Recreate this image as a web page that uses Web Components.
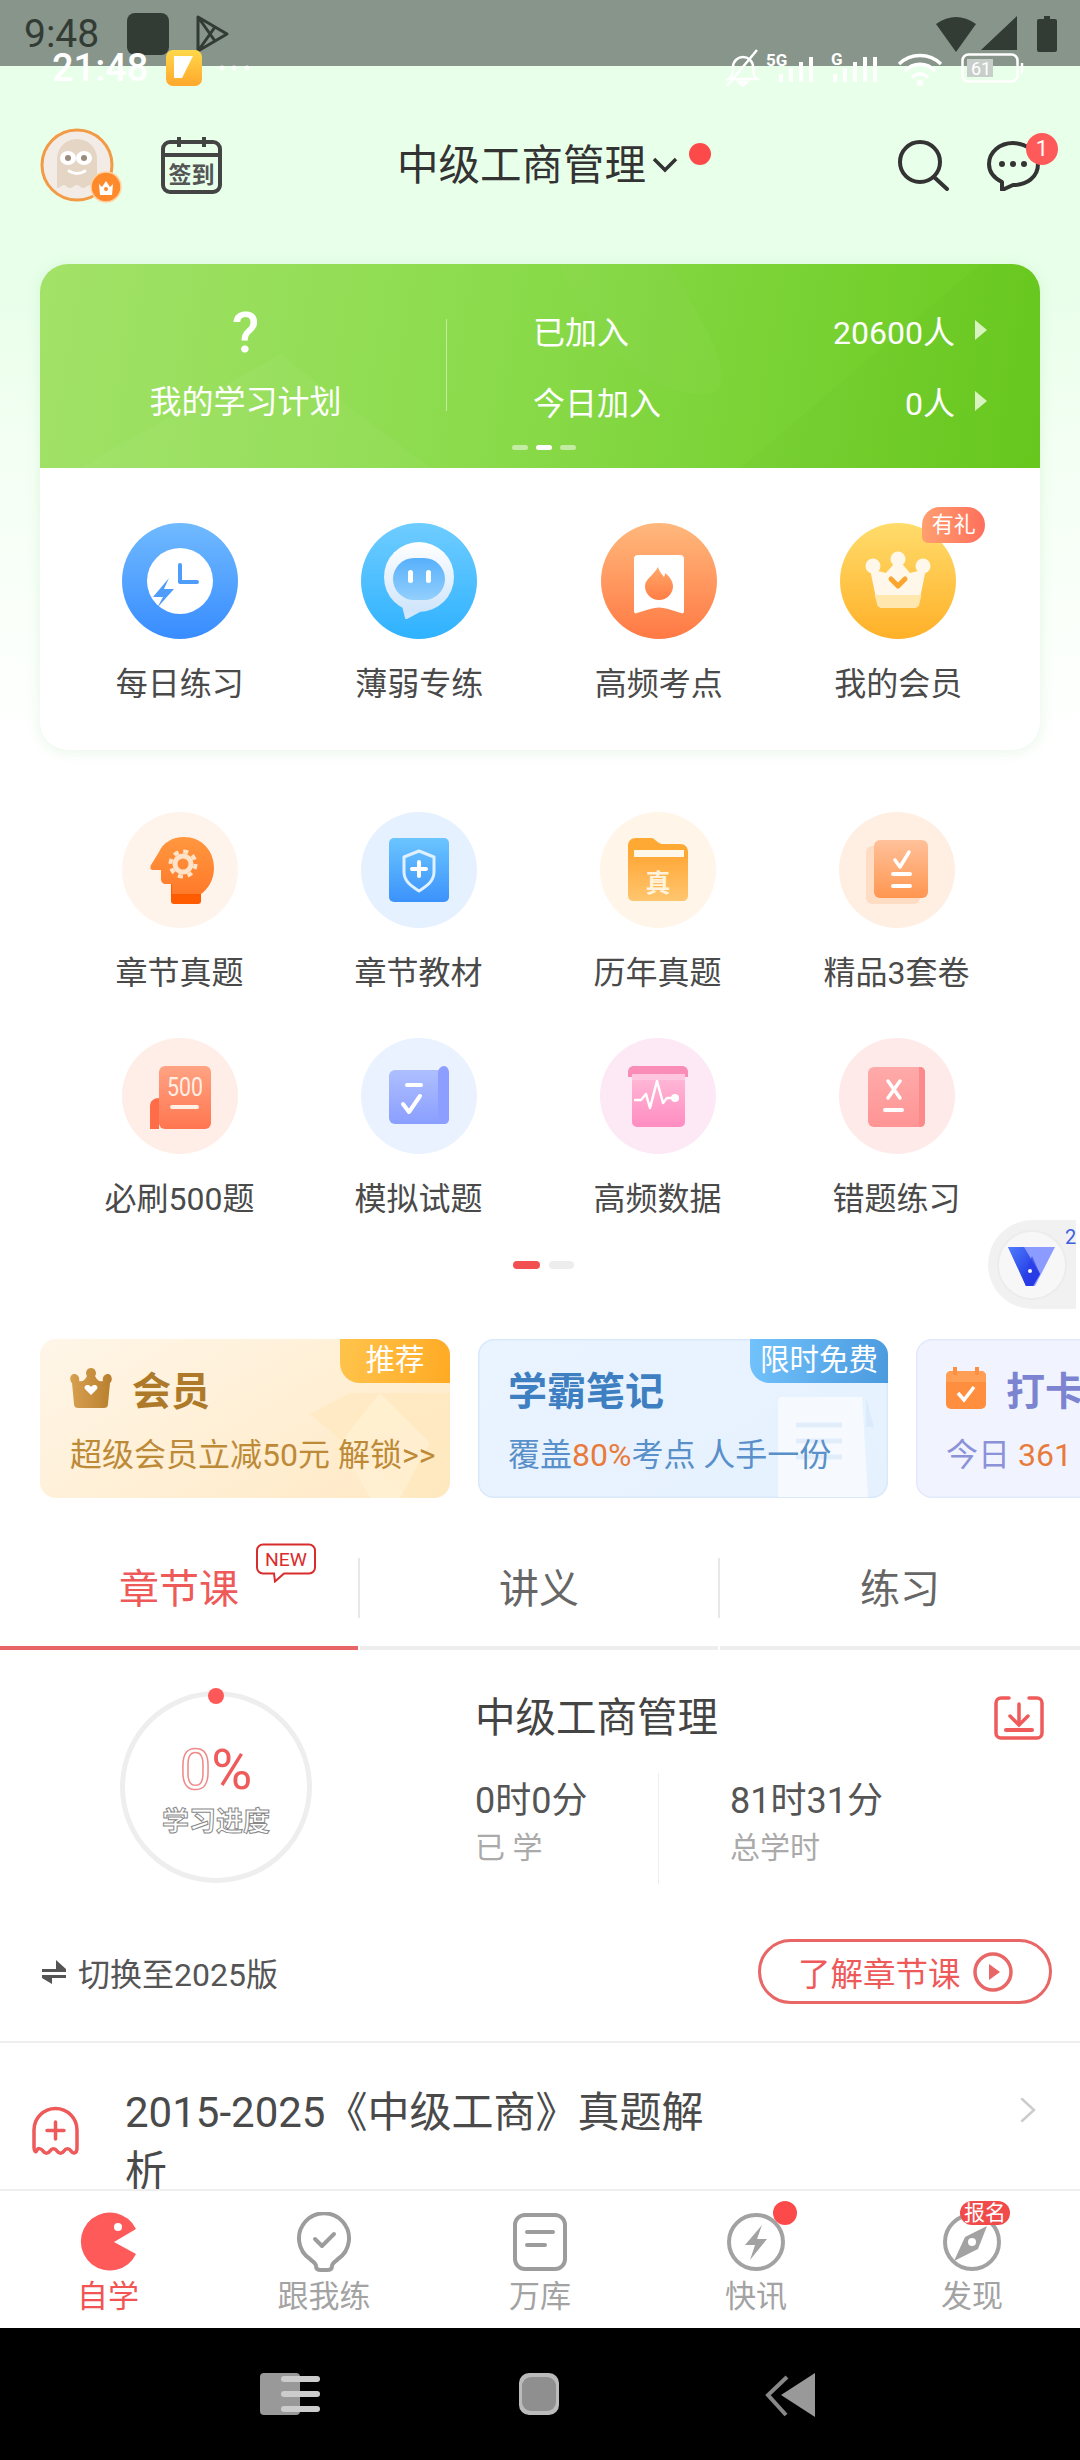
<!DOCTYPE html>
<html lang="zh">
<head>
<meta charset="utf-8">
<title>中级工商管理</title>
<style>
  html, body { margin: 0; padding: 0; background: #fff; }
  body {
    width: 1080px;
    height: 2460px;
    overflow: hidden;
    font-family: Roboto, "Noto Sans CJK SC", sans-serif;
  }
</style>
</head>
<body>
  <status-bar></status-bar>
  <top-area>
    <app-header></app-header>
    <plan-card></plan-card>
  </top-area>
  <tool-grid></tool-grid>
  <promo-row></promo-row>
  <course-tabs></course-tabs>
  <progress-panel></progress-panel>
  <course-row></course-row>
  <bottom-nav></bottom-nav>
  <system-nav></system-nav>

<script>
// tile artwork, all drawn on a 116 box
const TILE_ICONS = {
  clock: `<defs><linearGradient id="g" x1="0" y1="0" x2="0" y2="1"><stop offset="0" stop-color="#70baff"/><stop offset="1" stop-color="#388cff"/></linearGradient></defs>
    <circle cx="58" cy="58" r="58" fill="url(#g)"/><circle cx="58" cy="58" r="33" fill="#fff"/>
    <path d="M58 42v17h17" fill="none" stroke="#4f9dfb" stroke-width="4" stroke-linecap="round" stroke-linejoin="round"/>
    <path d="M47 55 31 74h10l-6 11 17-19H42z" fill="#4f9dfb"/>`,
  robot: `<defs><linearGradient id="g" x1="0" y1="0" x2="0" y2="1"><stop offset="0" stop-color="#6fccff"/><stop offset="1" stop-color="#2fb2ff"/></linearGradient>
    <linearGradient id="w" x1="0" y1="0" x2="0" y2="1"><stop offset="0" stop-color="#fff"/><stop offset="1" stop-color="#cfe5fb"/></linearGradient>
    <linearGradient id="f" x1="0" y1="0" x2="0" y2="1"><stop offset="0" stop-color="#57b0fb"/><stop offset="1" stop-color="#92cffd"/></linearGradient></defs>
    <circle cx="58" cy="58" r="58" fill="url(#g)"/>
    <path d="M41 83l3 12c0 1 1 1 2 1l13-7z" fill="#d3e6fb"/><circle cx="58" cy="54" r="35" fill="url(#w)"/>
    <rect x="32" y="35" width="52" height="42" rx="21" fill="url(#f)"/>
    <rect x="47" y="47" width="5" height="13" rx="2.5" fill="#fff"/><rect x="65" y="47" width="5" height="13" rx="2.5" fill="#fff"/>`,
  flame: `<defs><linearGradient id="g" x1="0" y1="0" x2="0" y2="1"><stop offset="0" stop-color="#ffb87c"/><stop offset="1" stop-color="#ff7944"/></linearGradient>
    <linearGradient id="f" x1="0" y1="0" x2="0" y2="1"><stop offset="0" stop-color="#ffa86a"/><stop offset="1" stop-color="#ff7d45"/></linearGradient></defs>
    <circle cx="58" cy="58" r="58" fill="url(#g)"/>
    <path d="M37 32h42a4 4 0 0 1 4 4v52c0 2-1 3-3 2l-13-4c-6-2-12-2-18 0l-13 4c-2 1-3 0-3-2V36a4 4 0 0 1 4-4z" fill="#fff"/>
    <path d="M57 44c2 6 4 7 6 10 1-2 1-3 1-4 4 3 8 8 8 13a14 14 0 0 1-28 0c0-7 9-11 13-19z" fill="url(#f)"/>`,
  crown: `<defs><linearGradient id="g" x1="0" y1="0" x2="0" y2="1"><stop offset="0" stop-color="#ffdc6b"/><stop offset="1" stop-color="#ffb028"/></linearGradient></defs>
    <circle cx="58" cy="58" r="58" fill="url(#g)"/>
    <g fill="#fff8ea"><circle cx="33" cy="43" r="7.5"/><circle cx="58" cy="36" r="7.5"/><circle cx="83" cy="43" r="7.5"/>
    <path d="M30 46l16 4 12-14 12 14 16-4-7 34a5 5 0 0 1-5 5H42a5 5 0 0 1-5-5z"/></g>
    <path d="M34.500 72h47l-2 8a5 5 0 0 1-5 5H42a5 5 0 0 1-5-5z" fill="#ffe7ad"/>
    <path d="M51 56l7 7 7-7" fill="none" stroke="#fba52f" stroke-width="5" stroke-linejoin="round" stroke-linecap="round"/>`,
  head: `<defs><linearGradient id="g" x1="0" y1="0" x2="0" y2="1"><stop offset="0" stop-color="#ff973f"/><stop offset="1" stop-color="#ff7a2b"/></linearGradient></defs>
    <rect x="49" y="68" width="30" height="24" rx="3" fill="#ff5b00"/>
    <path d="M62 25c17 0 30 13 30 31 0 12-6 21-13 26H50V72h-6c-3 0-5-2-5-5V58h-8c-3 0-3-3-2-5l8-13C41 31 50 25 62 25z" fill="url(#g)"/>
    <circle cx="61" cy="52" r="8" fill="none" stroke="#ffe3c8" stroke-width="5"/>
    <circle cx="61" cy="52" r="12.500" fill="none" stroke="#ffe3c8" stroke-width="4" stroke-dasharray="5 4.800"/>`,
  shield: `<defs><linearGradient id="g" x1="0" y1="0" x2="0" y2="1"><stop offset="0" stop-color="#6ac5ff"/><stop offset="1" stop-color="#3c92fb"/></linearGradient></defs>
    <rect x="28" y="26" width="60" height="64" rx="5" fill="url(#g)"/>
    <path d="M58 39l15 6v15c0 9-7 14-15 19-8-5-15-10-15-19V45z" fill="none" stroke="#dff0ff" stroke-width="3" stroke-linejoin="round"/>
    <path d="M58 50v14M51 57h14" stroke="#fff" stroke-width="4" stroke-linecap="round"/>`,
  folder: `<defs><linearGradient id="g" x1="0" y1="0" x2="0" y2="1"><stop offset="0" stop-color="#ffa93a"/><stop offset="1" stop-color="#ffc66f"/></linearGradient></defs>
    <path d="M28 34c0-5 3-8 8-8h15c4 0 6 5 11 6h18c5 0 8 3 8 8v10H28z" fill="#ffa935"/>
    <rect x="34" y="38" width="50" height="12" fill="#fff7ea"/>
    <path d="M28 45h60v38c0 4-2 6-6 6H34c-4 0-6-2-6-6z" fill="url(#g)"/>
    <text x="58" y="80" font-size="25" font-weight="700" fill="#fff3dc" text-anchor="middle">真</text>`,
  list: `<defs><linearGradient id="g" x1="0" y1="0" x2="0" y2="1"><stop offset="0" stop-color="#ffc19a"/><stop offset="1" stop-color="#ff9650"/></linearGradient></defs>
    <rect x="27" y="34" width="54" height="58" rx="6" fill="#ffdcc4"/><rect x="35" y="28" width="54" height="58" rx="6" fill="url(#g)"/>
    <path d="M56 48l5 7 9-15" fill="none" stroke="#fff" stroke-width="3.5" stroke-linecap="round" stroke-linejoin="round"/>
    <path d="M54 62h17M54 74h17" stroke="#fff" stroke-width="4" stroke-linecap="round"/>`,
  scroll500: `<defs><linearGradient id="g" x1="0" y1="0" x2="0" y2="1"><stop offset="0" stop-color="#ffa383"/><stop offset="1" stop-color="#ff7650"/></linearGradient></defs>
    <rect x="37" y="28" width="52" height="63" rx="6" fill="url(#g)"/><path d="M28 91V68c0-5 4-8 9-8v31z" fill="#ff6d48"/>
    <text x="63" y="58" font-size="25" fill="#fff0e6" text-anchor="middle" textLength="36" lengthAdjust="spacingAndGlyphs">500</text>
    <path d="M50 69h25" stroke="#fff0e6" stroke-width="4" stroke-linecap="round"/>`,
  scroll: `<defs><linearGradient id="g" x1="0" y1="0" x2="0" y2="1"><stop offset="0" stop-color="#aebfff"/><stop offset="1" stop-color="#8a9eff"/></linearGradient></defs>
    <path d="M34 32h48v54H34a6 6 0 0 1-6-6V38a6 6 0 0 1 6-6z" fill="url(#g)"/>
    <path d="M77 35c0-4 3-7 6-7s5 3 5 7v46c0 3-2 5-5 5h-6z" fill="#8c9eff"/>
    <path d="M46 47h14" stroke="#fff" stroke-width="4" stroke-linecap="round"/>
    <path d="M42 66l6 8 11-16" fill="none" stroke="#fff" stroke-width="4" stroke-linecap="round" stroke-linejoin="round"/>`,
  pulse: `<defs><linearGradient id="g" x1="0" y1="0" x2="0" y2="1"><stop offset="0" stop-color="#ffc0da"/><stop offset="1" stop-color="#ff8cc1"/></linearGradient></defs>
    <rect x="32" y="30" width="53" height="59" rx="5" fill="url(#g)"/><path d="M28 34c0-4 3-6 6-6h48c3 0 6 2 6 6v5H28z" fill="#f98db8"/><rect x="32" y="36" width="53" height="6" fill="#ffc6dd"/>
    <path d="M34 62h7l5-6 4 14 7-27 6 22 4-5h10" fill="none" stroke="#fff" stroke-width="2.5" stroke-linejoin="round"/><circle cx="75" cy="60" r="4" fill="#fff"/>`,
  cross: `<defs><linearGradient id="g" x1="0" y1="0" x2="0" y2="1"><stop offset="0" stop-color="#ffaaaa"/><stop offset="1" stop-color="#ff9494"/></linearGradient></defs>
    <rect x="29" y="29" width="57" height="60" rx="6" fill="url(#g)"/><path d="M80 29h1c3 0 5 2 5 5v50c0 3-2 5-5 5h-1z" fill="#fd8a8a"/>
    <path d="M49 43l12 17M61 43 49 60" stroke="#fff" stroke-width="3.5" stroke-linecap="round"/>
    <path d="M46 72h17" stroke="#fff" stroke-width="4" stroke-linecap="round"/>`
};

// bottom bar artwork on a 60 box
const NAV_ICONS = {
  pac: `<path d="M58 17A29 29 0 1 0 58 42L36 30z" fill="#fe5a5a"/><circle cx="40" cy="15" r="4" fill="#fff"/>`,
  bulb: `<path d="M22 55c0-3-3-4-6-7a25 25 0 1 1 28 0c-3 3-6 4-6 7 0 3-2 4-5 4H27c-3 0-5-1-5-4z" transform="translate(0 -1)" fill="none" stroke="#9c9c9c" stroke-width="4"/><path d="M21 27l7 7 12-12" fill="none" stroke="#9c9c9c" stroke-width="4" stroke-linecap="round" stroke-linejoin="round"/>`,
  book: `<rect x="5" y="3" width="50" height="54" rx="10" fill="none" stroke="#9c9c9c" stroke-width="4"/><path d="M17 20h26M17 33h18" stroke="#9c9c9c" stroke-width="4" stroke-linecap="round"/>`,
  bolt: `<circle cx="30" cy="30" r="27" fill="none" stroke="#a2a2a2" stroke-width="4"/><path d="M36 13 19 33h10l-5 15 17-21H31z" fill="#a2a2a2"/>`,
  compass: `<circle cx="30" cy="30" r="27" fill="none" stroke="#a2a2a2" stroke-width="4"/><path d="M45 14 36 37 12 49 23 25z" fill="#a2a2a2"/><circle cx="30" cy="30" r="4" fill="#fff"/>`
};

class StatusBar extends HTMLElement {
  constructor() {
    super();
    this.attachShadow({ mode: "open" });
    this.shadowRoot.innerHTML = `
      <style>
        :host { display: block; position: relative; height: 66px; background: #87958a; }
        .outer { display: flex; align-items: center; height: 68px; padding-left: 24px; color: #333b35; }
        .time { font-size: 39px; width: 103px; }
        .right { margin-left: auto; margin-right: 23px; display: flex; align-items: center; }
        /* the app's own bar shows through on top of the system one */
        .inner { position: absolute; left: 52px; right: 55px; top: 50px; height: 36px; display: flex; align-items: center; color: #fff; }
        .clock { font-size: 38px; font-weight: 500; width: 114px; }
        .tray { margin-left: auto; display: flex; align-items: center; }
        svg { display: block; }
      </style>
      <div class="outer">
        <span class="time">9:48</span>
        <svg width="42" height="42"><rect width="42" height="42" rx="8" fill="#333b35"/></svg>
        <svg width="36" height="40" style="margin-left:26px" fill="none" stroke="#333b35" stroke-width="3" stroke-linejoin="round"><path d="M3 3v34l29-17zM3 3l17 24M3 37l17-24"/></svg>
        <div class="right">
          <svg width="40" height="36"><path d="M0 8Q20-6 40 8L20 36z" fill="#333b35"/></svg>
          <svg width="36" height="36" style="margin-left:5px"><path d="M36 0v34H0z" fill="#333b35"/></svg>
          <svg width="20" height="36" style="margin-left:20px"><path d="M7 0h6v3h5a2 2 0 0 1 2 2v29a2 2 0 0 1-2 2H2a2 2 0 0 1-2-2V5a2 2 0 0 1 2-2h5z" fill="#333b35"/></svg>
        </div>
      </div>
      <div class="inner">
        <span class="clock">21:48</span>
        <svg width="36" height="36"><defs><linearGradient id="y" x1="0" y1="0" x2="0" y2="1"><stop offset="0" stop-color="#ffd84a"/><stop offset="1" stop-color="#ffa72c"/></linearGradient></defs><rect width="36" height="36" rx="7" fill="url(#y)"/><path d="M8 6h19L16 28H8z" fill="#fff"/></svg>
        <svg width="32" height="6" style="margin-left:17px" fill="#fff" opacity=".9"><circle cx="3" cy="3" r="2.5"/><circle cx="15" cy="3" r="2.5"/><circle cx="28" cy="3" r="2.5"/></svg>
        <div class="tray">
          <svg width="240" height="38" fill="#fff" stroke="none">
            <path d="M4 30c3-2 4-5 4-12 0-6 5-10 10-10s10 4 10 10c0 7 1 10 4 12zM14 33h8l-4 4zM2 37 32 1" fill="none" stroke="#fff" stroke-width="2.5"/>
            <text x="41" y="17" font-size="17" font-weight="700">5G</text>
            <path d="M54 25h4v8h-4zM64 19h4v14h-4zM74 13h4v20h-4zM84 8h4v25h-4z"/>
            <text x="106" y="16" font-size="17" font-weight="700">G</text>
            <path d="M108 25h4v8h-4zM118 19h4v14h-4zM128 13h4v20h-4zM148 8h4v25h-4zM138 8h4v25h-4z"/>
            <path d="M174 15a30 30 0 0 1 42 0M180 22a20 20 0 0 1 30 0M187 29a10 10 0 0 1 16 0" fill="none" stroke="#fff" stroke-width="3.5"/><circle cx="195" cy="34" r="3"/>
          </svg>
          <svg width="64" height="30" style="margin-left:-4px" fill="none" stroke="#fff" stroke-width="2.5"><rect x="1.5" y="1.5" width="55" height="27" rx="6"/><rect x="6" y="6" width="26" height="18" fill="#c8cfca" stroke="none"/><text x="20" y="22" font-size="18" text-anchor="middle" fill="#fff" stroke="none">61</text><path d="M61 10v10"/></svg>
        </div>
      </div>
    `;
  }
}

class TopArea extends HTMLElement {
  constructor() {
    super();
    this.attachShadow({ mode: "open" });
    this.shadowRoot.innerHTML = `
      <style>
        :host { display: block; background: linear-gradient(#e8ffe9 0, #e8ffe9 210px, #f4fff4 400px, #fff 684px); }
      </style>
      <slot></slot>
    `;
  }
}

class AppHeader extends HTMLElement {
  constructor() {
    super();
    this.attachShadow({ mode: "open" });
    this.shadowRoot.innerHTML = `
      <style>
        :host { display: flex; align-items: center; height: 66px; padding: 66px 40px 0 40px; color: #333; }
        svg { display: block; flex: none; }
        .avatar { position: relative; flex: none; width: 74px; height: 74px; }
        .crown { position: absolute; left: 50px; top: 43px; }
        .cal { margin-left: 47px; }
        .title { margin-left: 175px; padding-top: 2px; font-size: 41.5px; line-height: 66px; color: #333; white-space: nowrap; }
        .drop { margin-left: 6px; }
        .dot { position: relative; top: -11px; margin-left: 11px; width: 22px; height: 22px; border-radius: 50%; background: #fc4a4a; }
        .search { margin-left: auto; }
        .chat { position: relative; margin-left: 37px; width: 53px; height: 48px; }
        .badge { position: absolute; left: 39px; top: -8px; width: 32px; height: 32px; border-radius: 50%; background: #ff5a5a; color: #fff; font-size: 22px; line-height: 32px; text-align: center; }
      </style>
      <div class="avatar">
        <svg width="74" height="74">
          <circle cx="37" cy="37" r="35" fill="#f3ebe6" stroke="#f39a45" stroke-width="3"/>
          <path d="M17 60V31a20 20 0 0 1 40 0v29c-3 0-4-3-7-3s-4 3-7 3-3-3-6-3-4 3-7 3-4-3-6-3-4 3-7 3z" fill="#e4d5c5"/>
          <ellipse cx="28" cy="30" rx="8" ry="7" fill="#fff"/><ellipse cx="44" cy="30" rx="8" ry="7" fill="#fff"/>
          <circle cx="28" cy="30" r="3" fill="#9a8b7d"/><circle cx="44" cy="30" r="3" fill="#9a8b7d"/>
          <path d="M29 43q8 5 16 0" fill="none" stroke="#fff" stroke-width="3" stroke-linecap="round"/>
        </svg>
        <svg class="crown" width="32" height="32">
          <circle cx="16" cy="16" r="15" fill="#ff8a2b" stroke="#ffd3a8" stroke-width="1.5"/>
          <path d="M9 13l3 3 4-6 4 6 3-3-1 11H10z" fill="#fff"/><circle cx="16" cy="18" r="2" fill="#ff8a2b"/>
        </svg>
      </div>
      <svg class="cal" width="61" height="58" fill="none" stroke="#444" stroke-width="4">
        <rect x="2" y="6" width="57" height="50" rx="7"/><path d="M2 19h57M18 1v10M43 1v10"/>
        <text x="30.5" y="47" font-size="23" font-weight="700" fill="#555" stroke="none" text-anchor="middle">签到</text>
      </svg>
      <div class="title">中级工商管理</div>
      <svg class="drop" width="26" height="16" fill="none" stroke="#333" stroke-width="3.5"><path d="M2 2l11 11L24 2"/></svg>
      <div class="dot"></div>
      <svg class="search" width="54" height="52" fill="none" stroke="#333" stroke-width="4" stroke-linecap="round"><circle cx="24" cy="23" r="20"/><path d="M38 38l13 12"/></svg>
      <div class="chat">
        <svg width="53" height="50" fill="none" stroke="#333" stroke-width="4" stroke-linejoin="round">
          <path d="M26 2c13 0 25 9 25 21 0 13-11 21-25 21l-11 5v-8C7 37 2 31 2 23 2 11 13 2 26 2z"/>
          <circle cx="15" cy="23" r="3" fill="#333" stroke="none"/><circle cx="26" cy="23" r="3" fill="#333" stroke="none"/><circle cx="37" cy="23" r="3" fill="#333" stroke="none"/>
        </svg>
        <div class="badge">1</div>
      </div>
    `;
  }
}

class IconTile extends HTMLElement {
  static get observedAttributes() {
    return ["icon", "label", "bg", "tag"];
  }

  connectedCallback() {
    this.render();
  }

  attributeChangedCallback(name, oldValue, newValue) {
    if (oldValue !== newValue) {
      this.render();
    }
  }

  constructor() {
    super();
    this.attachShadow({ mode: "open" });
  }

  render() {
    const bg = this.getAttribute("bg") || "transparent";
    const tag = this.getAttribute("tag");
    this.shadowRoot.innerHTML = `
      <style>
        :host { display: flex; flex-direction: column; align-items: center; }
        .pic { position: relative; width: 116px; height: 116px; border-radius: 50%; background: ${bg}; }
        svg { display: block; }
        .tag { position: absolute; left: 82px; top: -16px; width: 63px; height: 36px; border-radius: 18px 18px 18px 6px; background: linear-gradient(90deg, #ffa070, #ff6f5c); color: #fff; font-size: 22px; line-height: 36px; text-align: center; }
        .label { margin-top: 23px; font-size: 32px; line-height: 44px; color: #4a4a4a; white-space: nowrap; }
      </style>
      <div class="pic">
        <svg width="116" height="116" viewBox="0 0 116 116">${TILE_ICONS[this.getAttribute("icon")] || ""}</svg>
        ${tag ? `<div class="tag">${tag}</div>` : ""}
      </div>
      <div class="label">${this.getAttribute("label") || ""}</div>
    `;
  }
}

class PlanCard extends HTMLElement {
  constructor() {
    super();
    this.attachShadow({ mode: "open" });
    this.shadowRoot.innerHTML = `
      <style>
        :host { display: block; width: 1000px; height: 486px; margin: 66px 0 0 40px; border-radius: 28px; overflow: hidden; background: #fff; box-shadow: 0 2px 14px rgba(110, 200, 120, .16); }
        .banner { position: relative; box-sizing: border-box; height: 204px; padding-top: 30px; color: #fff; overflow: hidden; background: linear-gradient(100deg, #a2e268 0, #8bdb4c 45%, #69ca1e 100%); }
        .shape { position: absolute; left: 0; top: 0; }
        .cols { position: relative; display: grid; grid-template-columns: 406px 1px 1fr; height: 142px; }
        .plan { display: flex; flex-direction: column; align-items: center; padding: 9px 0 0 5px; }
        .q { font-size: 56px; font-weight: 500; line-height: 60px; }
        .plan span:last-child { margin-top: 17px; font-size: 32px; line-height: 44px; }
        .rule { align-self: center; height: 92px; background: rgba(255, 255, 255, .45); }
        .stats { padding: 0 53px 0 86px; }
        .row { display: flex; align-items: center; height: 71px; font-size: 32px; }
        .row b { margin-left: auto; font-weight: 400; }
        .row svg { margin-left: 20px; }
        .dots { position: relative; display: flex; justify-content: center; gap: 8px; margin-top: 9px; padding-left: 8px; }
        .dots i { width: 16px; height: 5px; border-radius: 3px; background: rgba(255, 255, 255, .5); }
        .dots i:nth-child(2) { background: #fff; }
        .tiles { display: grid; grid-template-columns: repeat(4, 239.5px); padding: 55px 20px 0; }
      </style>
      <div class="banner">
        <svg class="shape" width="1000" height="204"><path d="M40 204 240 90l150 114z" fill="#fff" opacity=".04"/><path d="M520 0h110c40 70 70 120 40 130-60 6-120-60-150-130z" fill="#fff" opacity=".025"/><path d="M700 204 940 0h60v204z" fill="#000" opacity=".012"/></svg>
        <div class="cols">
          <div class="plan"><span class="q">?</span><span>我的学习计划</span></div>
          <div class="rule"></div>
          <div class="stats">
            <div class="row"><span>已加入</span><b>20600人</b><svg width="12" height="20"><path d="M0 0l12 10L0 20z" fill="#d8f3bd"/></svg></div>
            <div class="row"><span>今日加入</span><b>0人</b><svg width="12" height="20"><path d="M0 0l12 10L0 20z" fill="#d8f3bd"/></svg></div>
          </div>
        </div>
        <div class="dots"><i></i><i></i><i></i></div>
      </div>
      <div class="tiles">
        <icon-tile icon="clock" label="每日练习"></icon-tile>
        <icon-tile icon="robot" label="薄弱专练"></icon-tile>
        <icon-tile icon="flame" label="高频考点"></icon-tile>
        <icon-tile icon="crown" label="我的会员" tag="有礼"></icon-tile>
      </div>
    `;
  }
}

class ToolGrid extends HTMLElement {
  constructor() {
    super();
    this.attachShadow({ mode: "open" });
    this.shadowRoot.innerHTML = `
      <style>
        :host { display: block; position: relative; padding-top: 62px; }
        .grid { display: grid; grid-template-columns: repeat(4, 239px); row-gap: 43px; padding-left: 60px; }
        .pager { display: flex; gap: 9px; margin: 40px 0 0 513px; }
        .pager i { width: 25px; height: 8px; border-radius: 4px; background: #ededed; }
        .pager i:first-child { width: 27px; background: #f25050; }
        .float { position: absolute; left: 988px; top: 470px; width: 88px; height: 89px; border-radius: 45px 0 0 45px; background: #f1f1f1; }
        .float svg { position: absolute; left: 0; top: 0; }
        .float span { position: absolute; left: 77px; top: 5px; font-size: 20px; line-height: 24px; color: #3f5fe0; }
      </style>
      <div class="grid">
        <icon-tile icon="head" bg="#fff4ec" label="章节真题"></icon-tile>
        <icon-tile icon="shield" bg="#e6f1ff" label="章节教材"></icon-tile>
        <icon-tile icon="folder" bg="#fff5e9" label="历年真题"></icon-tile>
        <icon-tile icon="list" bg="#ffefe3" label="精品3套卷"></icon-tile>
        <icon-tile icon="scroll500" bg="#ffeee7" label="必刷500题"></icon-tile>
        <icon-tile icon="scroll" bg="#eaf1ff" label="模拟试题"></icon-tile>
        <icon-tile icon="pulse" bg="#fde9f5" label="高频数据"></icon-tile>
        <icon-tile icon="cross" bg="#ffeaea" label="错题练习"></icon-tile>
      </div>
      <div class="pager"><i></i><i></i></div>
      <div class="float">
        <svg width="88" height="89">
          <defs><linearGradient id="v" x1="0" y1="0" x2="1" y2="1"><stop offset="0" stop-color="#4f7cff"/><stop offset="1" stop-color="#1323d8"/></linearGradient></defs>
          <circle cx="44" cy="45" r="34" fill="#f7f7f7" stroke="#ececec" stroke-width="2"/>
          <path d="M20 27h25l22 0-20 39h-9z" fill="#8c9bff"/><path d="M20 27h16l16 27-7 12h-7z" fill="url(#v)"/>
          <path d="M44 36l8 18-7 12h-7l-3-7z" fill="#2b3de8" opacity=".7"/><circle cx="42" cy="51" r="2" fill="#fff"/>
        </svg>
        <span>2</span>
      </div>
    `;
  }
}

class PromoCard extends HTMLElement {
  constructor() {
    super();
    this.attachShadow({ mode: "open" });
    const kind = this.getAttribute("kind");
    const tag = this.getAttribute("tag");
    this.shadowRoot.innerHTML = `
      <style>
        :host { display: block; position: relative; flex: none; box-sizing: border-box; width: 410px; height: 159px; padding: 24px 0 0 30px; border-radius: 16px; overflow: hidden; }
        :host([kind="gold"]) { background: linear-gradient(150deg, #fff6e8, #ffe9c4); }
        :host([kind="blue"]) { background: linear-gradient(150deg, #eaf4ff, #e6f1ff); box-shadow: inset 0 0 0 1.5px #d9e9fb; }
        :host([kind="violet"]) { background: #f1f4ff; box-shadow: inset 0 0 0 1.5px #e3e9fb; }
        .art { position: absolute; left: 0; top: 0; }
        .title { position: relative; display: flex; align-items: center; gap: 20px; height: 50px; font-size: 39px; font-weight: 700; white-space: nowrap; }
        .sub { position: relative; margin-top: 20px; font-size: 32px; line-height: 44px; white-space: nowrap; }
        :host([kind="gold"]) .title { color: #ae7a2a; }
        :host([kind="gold"]) .sub { color: #bd8a38; }
        :host([kind="blue"]) .title { color: #3e7fc2; }
        :host([kind="blue"]) .sub { color: #5a90c9; }
        :host([kind="violet"]) .title { color: #7c84d1; }
        :host([kind="violet"]) .sub { color: #8b92d8; }
        .tag { position: absolute; right: 0; top: 0; height: 44px; border-radius: 0 0 0 20px; color: #fff; font-size: 29.5px; line-height: 42px; text-align: center; }
        :host([kind="gold"]) .tag { width: 110px; background: linear-gradient(100deg, #ffc44c, #ffaa24); }
        :host([kind="blue"]) .tag { width: 138px; background: linear-gradient(100deg, #72c2fc, #4a9ade); }
      </style>
      <svg class="art" width="410" height="159"></svg>
      <div class="title"><slot name="icon"></slot><slot name="title"></slot></div>
      <div class="sub"><slot name="sub"></slot></div>
      ${tag ? `<div class="tag">${tag}</div>` : ""}
    `;
    const art = this.shadowRoot.querySelector(".art");
    if (kind === "gold") {
      art.innerHTML = `<path d="M310 54h100v105h-40l-60-50-40-34z" fill="#ffe8bd" opacity=".6"/><path d="M340 54l50 50-30 55h-30l-30-55z" fill="#fff3d9" opacity=".6"/>`;
    } else if (kind === "blue") {
      art.innerHTML = `<path d="M300 62a4 4 0 0 1 4-4h80l6 100H300z" fill="#f6faff"/><path d="M388 58l8 30h-8z" fill="#dcebfc"/><path d="M318 86h46M318 102h46M318 118h46" stroke="#e1edfb" stroke-width="5"/>`;
    }
  }
}

class PromoRow extends HTMLElement {
  constructor() {
    super();
    this.attachShadow({ mode: "open" });
    this.shadowRoot.innerHTML = `
      <style>
        :host { display: flex; gap: 28px; width: 1080px; margin-top: 70px; padding-left: 40px; box-sizing: border-box; overflow: hidden; }
        svg { display: block; }
      </style>
      <promo-card kind="gold" tag="推荐">
        <svg slot="icon" width="42" height="40" viewBox="0 0 42 40"><defs><linearGradient id="c" x1="0" y1="0" x2="1" y2="0"><stop offset="0" stop-color="#d7a050"/><stop offset="1" stop-color="#b87f2e"/></linearGradient></defs><path d="M8 40c-2 0-4-1-4-4L2 15C-1 13 0 6 4 6s6 4 5 7c4 1 6-1 8-5-2-2-1-8 4-8s6 6 4 8c2 4 4 6 8 5-1-3 1-7 5-7s5 7 2 9l-2 21c0 3-2 4-4 4z" fill="url(#c)"/><path d="M21 27l-6-6c-2-3 3-6 6-2 3-4 8-1 6 2z" fill="#fff"/></svg>
        <span slot="title">会员</span>
        <span slot="sub">超级会员立减50元 解锁&gt;&gt;</span>
      </promo-card>
      <promo-card kind="blue" tag="限时免费">
        <span slot="title">学霸笔记</span>
        <span slot="sub">覆盖<em style="font-style:normal;color:#e97b3a">80%</em>考点 人手一份</span>
      </promo-card>
      <promo-card kind="violet">
        <svg slot="icon" width="40" height="42" viewBox="0 0 40 42"><rect y="4" width="40" height="38" rx="5" fill="#ff8f3f"/><path d="M0 9a5 5 0 0 1 5-5h30a5 5 0 0 1 5 5v6H0z" fill="#ff9f55"/><path d="M9 0v8M31 0v8" stroke="#ff8f3f" stroke-width="4"/><path d="M12 26l6 7 10-13" fill="none" stroke="#fff" stroke-width="3.5"/></svg>
        <span slot="title">打卡</span>
        <span slot="sub">今日 <em style="font-style:normal;color:#e97b3a">361</em></span>
      </promo-card>
    `;
  }
}

class CourseTabs extends HTMLElement {
  constructor() {
    super();
    this.attachShadow({ mode: "open" });
    this.shadowRoot.innerHTML = `
      <style>
        :host { display: grid; grid-template-columns: 358px 2px 358px 2px 360px; margin-top: 40px; height: 112px; }
        .tab { position: relative; box-sizing: border-box; height: 112px; padding-top: 22px; border-bottom: 4px solid #eee; font-size: 40px; line-height: 60px; color: #666; text-align: center; }
        .on { color: #ee5a5a; border-color: #e96464; }
        .bar { height: 60px; margin-top: 20px; background: #e8e8e8; }
        .new { position: absolute; left: 255px; top: 5px; }
      </style>
      <div class="tab on">章节课
        <svg class="new" width="62" height="40"><path d="M8 1.5h46a6 6 0 0 1 6 6v17a6 6 0 0 1-6 6H29l-9 8-1-8H8a6 6 0 0 1-6-6v-17a6 6 0 0 1 6-6z" fill="#fff" stroke="#d92c2c" stroke-width="2"/><text x="31" y="23" font-size="18" fill="#d92c2c" text-anchor="middle" textLength="42" lengthAdjust="spacingAndGlyphs">NEW</text></svg>
      </div>
      <div class="bar"></div>
      <div class="tab">讲义</div>
      <div class="bar"></div>
      <div class="tab">练习</div>
    `;
  }
}

class ProgressPanel extends HTMLElement {
  constructor() {
    super();
    this.attachShadow({ mode: "open" });
    this.shadowRoot.innerHTML = `
      <style>
        :host { display: block; padding-top: 41px; border-bottom: 2px solid #eee; }
        svg { display: block; flex: none; }
        .top { display: flex; height: 193px; padding-left: 120px; }
        .ring { position: relative; flex: none; box-sizing: border-box; width: 192px; height: 192px; padding-top: 44px; border: 5px solid #eee; border-radius: 50%; text-align: center; }
        .ring::before { content: ""; position: absolute; left: 83px; top: -8px; width: 16px; height: 16px; border-radius: 50%; background: #fd5959; }
        .pct { font-size: 56px; line-height: 60px; color: #ef5b5b; }
        .pct i { font-style: normal; color: #fff; -webkit-text-stroke: 1.5px #ef8a8a; }
        .ring div:last-child { margin-top: 2px; font-size: 27px; font-weight: 700; line-height: 40px; color: #fff; -webkit-text-stroke: 1px #888; }
        .info { flex: 1; margin-left: 163px; padding-right: 36px; }
        .head { display: flex; justify-content: space-between; align-items: center; font-size: 40.5px; line-height: 54px; color: #444; }
        .stats { display: flex; height: 111px; margin-top: 28px; }
        .stat { padding-top: 3px; }
        .stat:first-child { width: 183px; border-right: 1.5px solid #eee; }
        .stat:last-child { padding-left: 71px; }
        .val { font-size: 36px; line-height: 50px; color: #555; white-space: nowrap; }
        .cap { font-size: 30px; line-height: 44px; color: #aaa; }
        .foot { display: flex; align-items: center; height: 65px; margin-top: 55px; padding: 0 28px 37px 42px; }
        .switch { display: flex; align-items: center; gap: 12px; font-size: 32px; color: #555; }
        .btn { display: flex; align-items: center; box-sizing: border-box; width: 294px; height: 65px; margin-left: auto; padding-left: 37px; border: 3px solid #e86666; border-radius: 33px; font-size: 32.5px; color: #ee5a5a; }
        .btn svg { margin-left: 12px; }
      </style>
      <div class="top">
        <div class="ring">
          <div class="pct"><i>0</i>%</div>
          <div>学习进度</div>
        </div>
        <div class="info">
          <div class="head">
            <span>中级工商管理</span>
            <svg width="50" height="44" fill="none" stroke="#ef5b5b" stroke-width="3.5" stroke-linecap="round"><path d="M15 2H7a5 5 0 0 0-5 5v30a5 5 0 0 0 5 5h36a5 5 0 0 0 5-5V7a5 5 0 0 0-5-5h-8"/><path d="M25 8v20M16 20l9 9 9-9"/><path d="M12 34h26" stroke-width="4"/></svg>
          </div>
          <div class="stats">
            <div class="stat"><div class="val">0时0分</div><div class="cap">已 学</div></div>
            <div class="stat"><div class="val">81时31分</div><div class="cap">总学时</div></div>
          </div>
        </div>
      </div>
      <div class="foot">
        <div class="switch">
          <svg width="24" height="24" fill="#555"><path d="M0 9h24v3H0zM14 0l10 9H14zM0 15h24v3H0zM10 24 0 18h10z"/></svg>
          <span>切换至2025版</span>
        </div>
        <div class="btn">
          <span>了解章节课</span>
          <svg width="40" height="40" fill="none" stroke="#e86666" stroke-width="3.5"><circle cx="20" cy="20" r="18"/><path d="M16 12l11 8-11 8z" fill="#e86666" stroke="none"/></svg>
        </div>
      </div>
    `;
  }
}

class CourseRow extends HTMLElement {
  constructor() {
    super();
    this.attachShadow({ mode: "open" });
    this.shadowRoot.innerHTML = `
      <style>
        :host { display: flex; height: 146px; overflow: hidden; }
        .ghost { flex: none; margin: 63px 0 0 32px; }
        .text { width: 600px; margin: 40px 0 0 46px; font-size: 42px; line-height: 59px; color: #4a4a4a; }
        .arrow { flex: none; margin: 54px 44px 0 auto; }
      </style>
      <svg class="ghost" width="47" height="51" fill="none" stroke="#ee5a5a" stroke-width="3.5"><path d="M2 42V24a21.5 21.5 0 0 1 43 0v18c0 6-4 6-6 3-2-3-5-3-7 0s-5 3-7 0-5-3-7 0-5 3-7 0-5-3-6-1c-1 3-3 2-3-4z" stroke-linejoin="round"/><path d="M23.500 16v17M15 24.500h17" stroke-width="3.500" stroke-linecap="round"/></svg>
      <div class="text">2015-2025《中级工商》真题解析</div>
      <svg class="arrow" width="16" height="26" fill="none" stroke="#ccc" stroke-width="2.500" stroke-linecap="round"><path d="M2 2l12 11L2 24"/></svg>
    `;
  }
}

class NavItem extends HTMLElement {
  constructor() {
    super();
    this.attachShadow({ mode: "open" });
    const active = this.hasAttribute("active");
    this.shadowRoot.innerHTML = `
      <style>
        :host { display: flex; flex-direction: column; align-items: center; }
        .pic { position: relative; width: 60px; height: 60px; }
        svg { display: block; }
        .label { margin-top: 5px; font-size: 31px; line-height: 40px; color: ${active ? "#f25454" : "#a3a3a3"}; }
        .dot { position: absolute; left: 47px; top: -11px; width: 24px; height: 24px; border-radius: 50%; background: #fc4a4a; }
        .tag { position: absolute; left: 18px; top: -11px; width: 50px; height: 24px; border-radius: 12px; background: #f04a4a; color: #fff; font-size: 21px; line-height: 24px; text-align: center; }
      </style>
      <div class="pic">
        <svg width="60" height="60" viewBox="0 0 60 60">${NAV_ICONS[this.getAttribute("icon")] || ""}</svg>
        ${this.hasAttribute("dot") ? `<div class="dot"></div>` : ""}
        ${this.getAttribute("tag") ? `<div class="tag">${this.getAttribute("tag")}</div>` : ""}
      </div>
      <div class="label">${this.getAttribute("label")}</div>
    `;
  }
}

class BottomNav extends HTMLElement {
  constructor() {
    super();
    this.attachShadow({ mode: "open" });
    this.shadowRoot.innerHTML = `
      <style>
        :host { display: grid; grid-template-columns: repeat(5, 216px); box-sizing: border-box; height: 139px; padding-top: 21px; border-top: 2px solid #eee; background: #fff; }
      </style>
      <nav-item icon="pac" label="自学" active></nav-item>
      <nav-item icon="bulb" label="跟我练"></nav-item>
      <nav-item icon="book" label="万库"></nav-item>
      <nav-item icon="bolt" label="快讯" dot></nav-item>
      <nav-item icon="compass" label="发现" tag="报名"></nav-item>
    `;
  }
}

class SystemNav extends HTMLElement {
  constructor() {
    super();
    this.attachShadow({ mode: "open" });
    this.shadowRoot.innerHTML = `
      <style>
        :host { display: flex; box-sizing: border-box; height: 132px; padding: 45px 0 0 260px; background: #000; }
        svg { display: block; }
      </style>
      <svg width="60" height="42"><rect width="40" height="42" rx="4" fill="#999"/><g fill="#ccc"><rect x="21" y="3" width="39" height="6" rx="3"/><rect x="21" y="18" width="39" height="6" rx="3"/><rect x="21" y="33" width="39" height="6" rx="3"/></g></svg>
      <svg width="40" height="42" style="margin-left:199px"><rect width="40" height="42" rx="10" fill="#bbb"/><rect x="3" y="4" width="34" height="34" rx="9" fill="#8f8f8f"/></svg>
      <svg width="50" height="44" style="margin-left:206px"><path d="M50 0v44L16 22z" fill="#999"/><path d="M22 4 3 22l18 20" fill="none" stroke="#888" stroke-width="4"/></svg>
    `;
  }
}

customElements.define("status-bar", StatusBar);
customElements.define("top-area", TopArea);
customElements.define("app-header", AppHeader);
customElements.define("icon-tile", IconTile);
customElements.define("plan-card", PlanCard);
customElements.define("tool-grid", ToolGrid);
customElements.define("promo-card", PromoCard);
customElements.define("promo-row", PromoRow);
customElements.define("course-tabs", CourseTabs);
customElements.define("progress-panel", ProgressPanel);
customElements.define("course-row", CourseRow);
customElements.define("nav-item", NavItem);
customElements.define("bottom-nav", BottomNav);
customElements.define("system-nav", SystemNav);
</script>
</body>
</html>
